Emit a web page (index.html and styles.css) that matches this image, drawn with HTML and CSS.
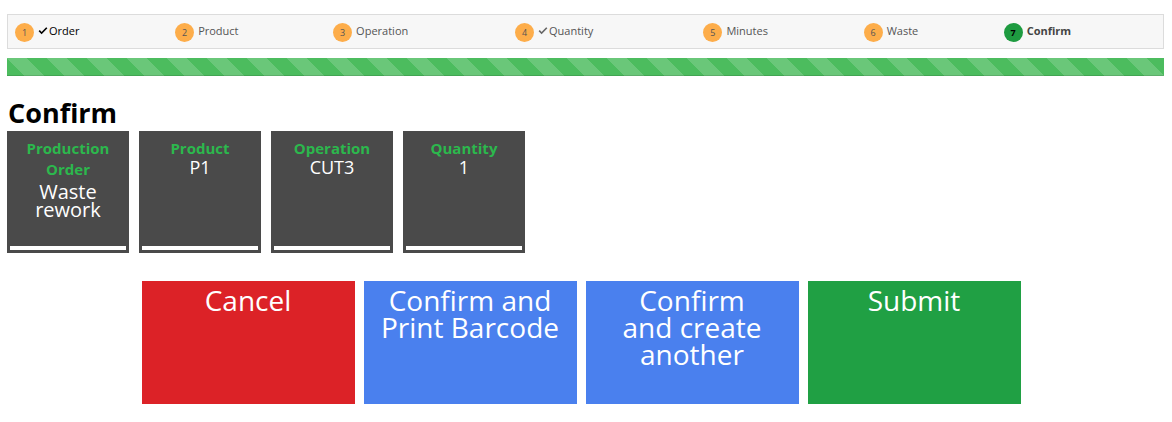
FILE: index.html
```html
<!DOCTYPE html>
<html>
<head>
<meta charset="utf-8">
<link rel="stylesheet" href="styles.css">
</head>
<body>
<div class="page">
  <div class="steps">
    <table class="steps-table">
      <tr>
        <td class="step done"><span class="num">1</span><svg class="check" viewBox="0 0 10 8"><path d="M0.6 4.2 L3.6 7.2 L9.4 1.2 L8.2 0.2 L3.6 5 L1.8 3 Z"/></svg>Order</td>
        <td class="step"><span class="num">2</span>Product</td>
        <td class="step"><span class="num">3</span>Operation</td>
        <td class="step"><span class="num">4</span><svg class="check grey" viewBox="0 0 10 8"><path d="M0.6 4.2 L3.6 7.2 L9.4 1.2 L8.2 0.2 L3.6 5 L1.8 3 Z"/></svg>Quantity</td>
        <td class="step"><span class="num">5</span>Minutes</td>
        <td class="step"><span class="num">6</span>Waste</td>
        <td class="step active"><span class="num">7</span>Confirm</td>
      </tr>
    </table>
  </div>
  <div class="progress"><div class="progress-bar"></div></div>
  <h1 class="title">Confirm</h1>
  <div class="cards">
    <div class="card"><div class="label">Production Order</div><div class="value value-wrapped">Waste rework</div><div class="card-bar"></div></div>
    <div class="card"><div class="label">Product</div><div class="value">P1</div><div class="card-bar"></div></div>
    <div class="card"><div class="label">Operation</div><div class="value">CUT3</div><div class="card-bar"></div></div>
    <div class="card"><div class="label">Quantity</div><div class="value">1</div><div class="card-bar"></div></div>
  </div>
  <div class="actions">
    <div class="btn btn-red">Cancel</div>
    <div class="btn btn-blue">Confirm and Print Barcode</div>
    <div class="btn btn-blue">Confirm<br>and create another</div>
    <div class="btn btn-green">Submit</div>
  </div>
</div>
</body>
</html>
```
FILE: styles.css
```css
* { box-sizing: border-box; }
html, body { margin: 0; padding: 0; background: #fff; }
body { font-family: "Open Sans", "Liberation Sans", sans-serif; color: #000; }
.page { padding: 14px 8px 0 7px; }

.steps {
  border: 1px solid #dcdcdc;
  background: #f7f7f7;
  height: 35px;
}
.steps-table { width: 100%; border-collapse: collapse; height: 33px; }
.step {
  padding: 1px 7px 0 7px;
  font-size: 11px;
  color: #555;
  white-space: nowrap;
  vertical-align: middle;
}
.step.done { color: #000; }
.num {
  display: inline-block;
  width: 19px;
  height: 19px;
  border-radius: 50%;
  background: #fdad4a;
  color: #555;
  font-size: 9px;
  line-height: 19px;
  text-align: center;
  margin-right: 4px;
  vertical-align: middle;
}
.step.active { font-weight: bold; color: #444; }
.step.active .num { background: #1e9b40; color: #000; }
.check { width: 10px; height: 8px; margin-right: 1px; fill: #000; vertical-align: 0px; }
.check.grey { fill: #666; }

.progress { margin-top: 9px; height: 18px; background: #f5f5f5; }
.progress-bar {
  height: 18px;
  width: 100%;
  background-color: #4cbc5e;
  background-image: linear-gradient(45deg, rgba(255,255,255,.17) 25%, transparent 25%, transparent 50%, rgba(255,255,255,.17) 50%, rgba(255,255,255,.17) 75%, transparent 75%, transparent);
  background-size: 40px 40px;
  box-shadow: inset 0 -1px 0 rgba(0,0,0,.12);
}

.title { font-size: 27px; font-weight: bold; margin: 18px 0 0 1px; line-height: 37px; }

.cards { display: flex; gap: 10px; }
.card {
  width: 122px; height: 122px;
  background: #4a4a4a;
  display: flex; flex-direction: column;
  text-align: center;
  padding-top: 7px;
}
.label { color: #2cb84d; font-weight: bold; font-size: 15px; line-height: 21px; padding: 0 14px; }
.value { color: #fff; font-size: 18px; line-height: 17px; padding: 0 20px; }
.value-wrapped { margin-top: 3px; font-size: 20px; line-height: 18px; }
.card-bar { margin: auto 3px 3px; height: 4px; background: #fff; }

.actions { display: flex; justify-content: center; gap: 9px; padding-right: 9px; margin-top: 28px; }
.btn {
  width: 213px; height: 123px;
  color: #fff;
  font-size: 28px;
  line-height: 27px;
  text-align: center;
  padding: 6px 6px 0;
}
.btn-red { background: #dc2227; }
.btn-blue { background: #4a80ee; }
.btn-green { background: #20a044; }
```
